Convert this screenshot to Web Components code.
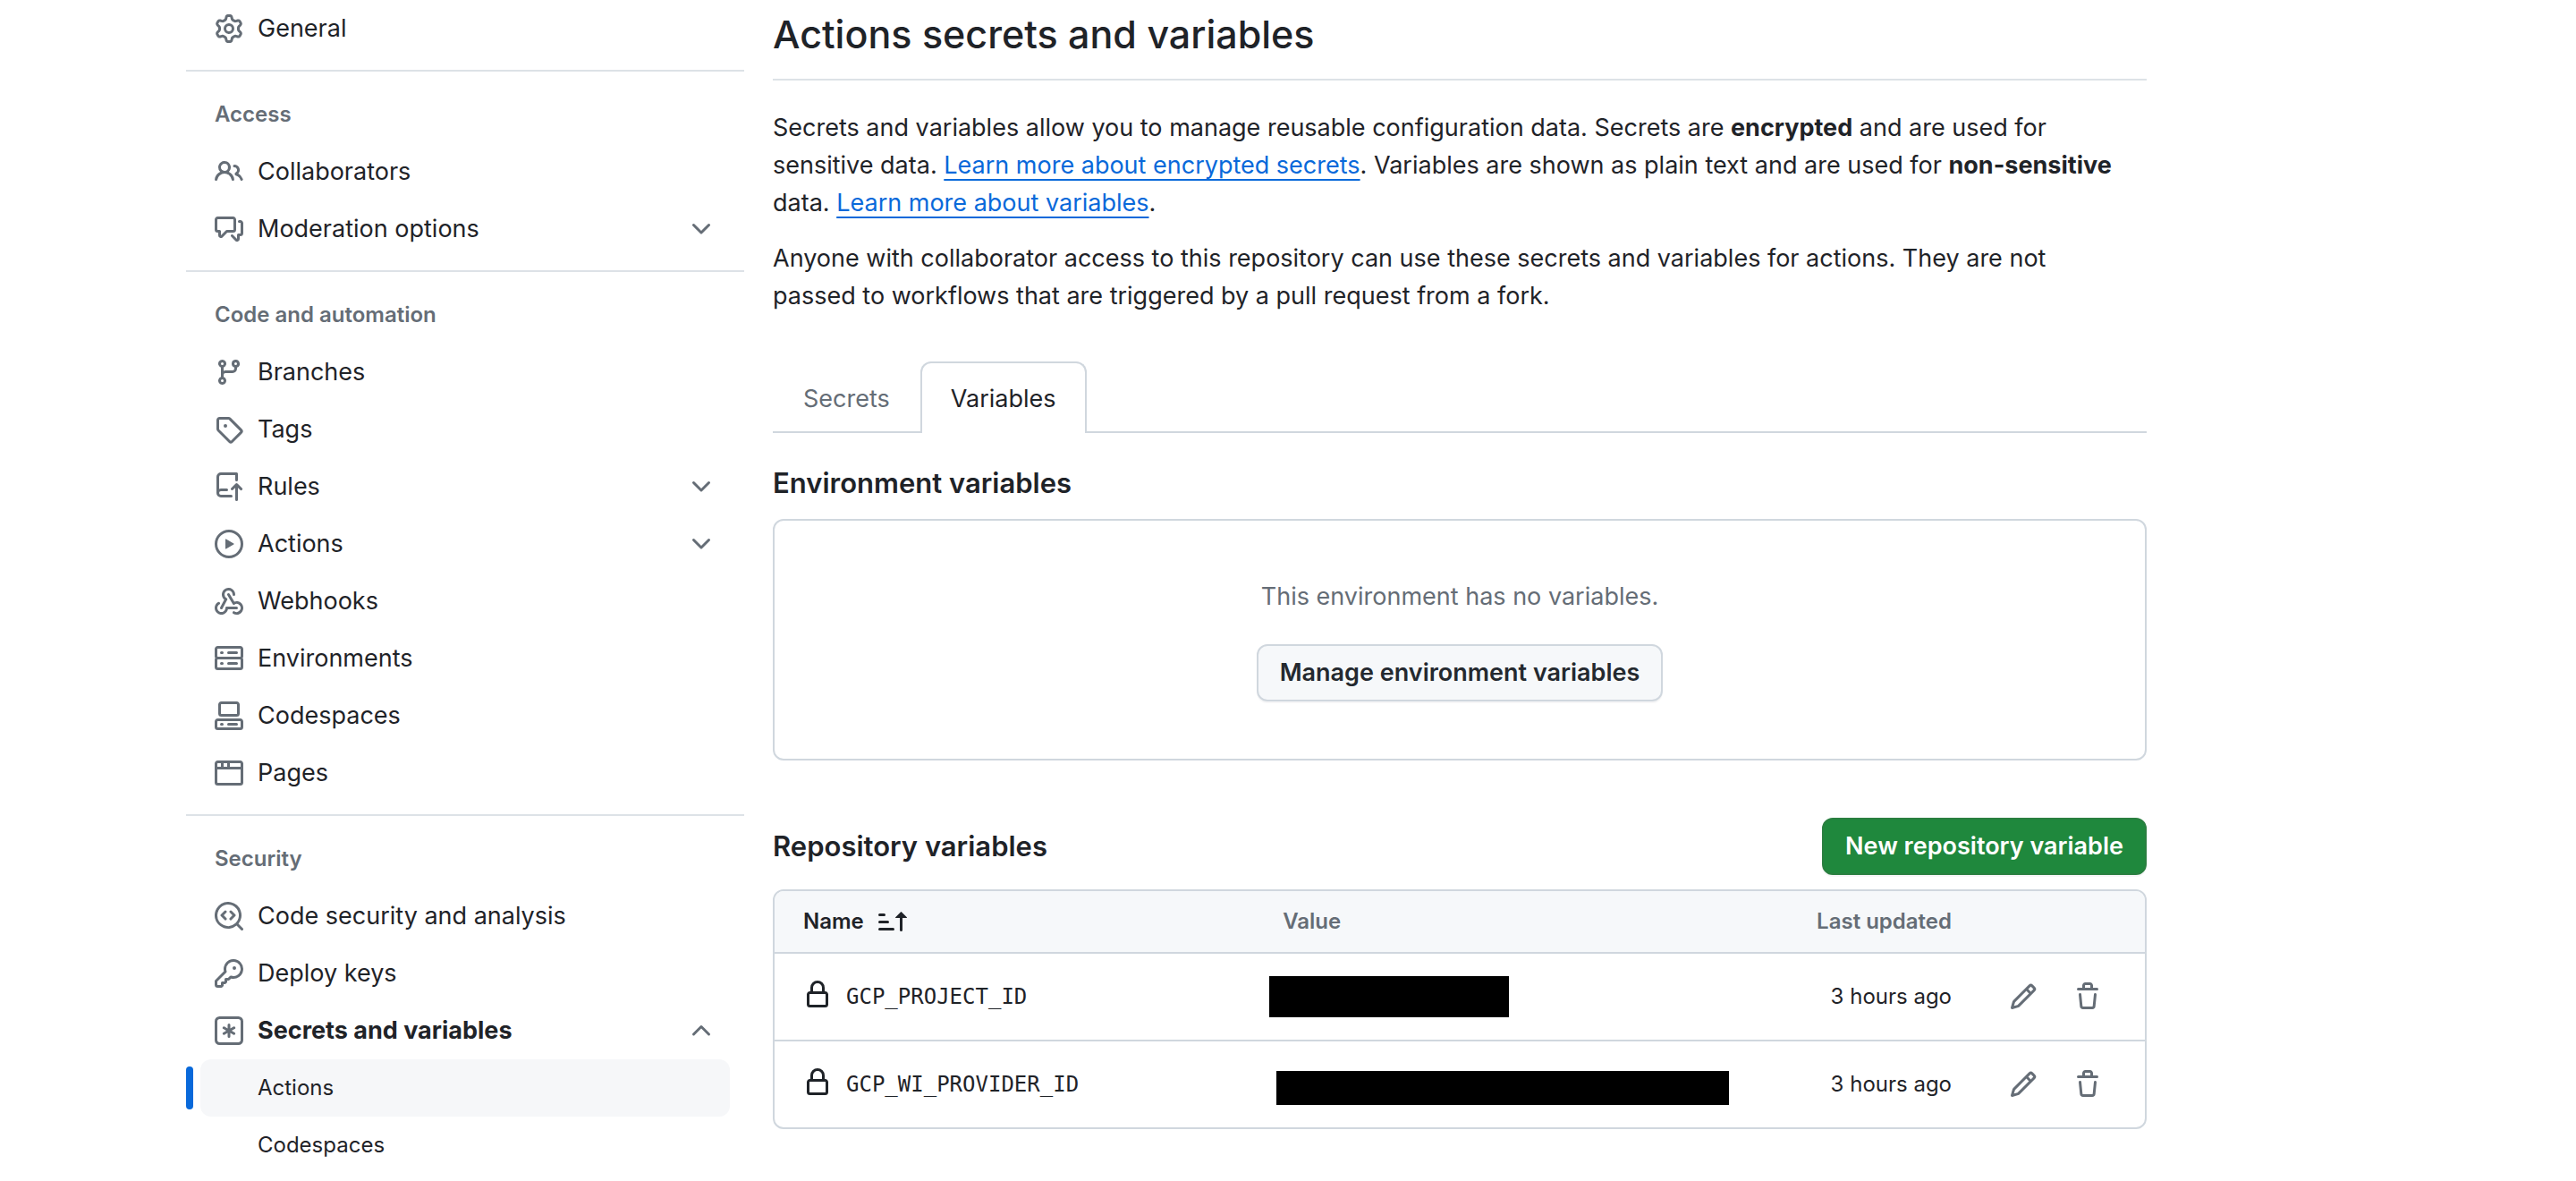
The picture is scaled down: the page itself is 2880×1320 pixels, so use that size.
<!DOCTYPE html>
<html lang="en">
<head>
<meta charset="utf-8">
<title>Actions secrets and variables</title>
<style>
  :root {
    --fg: #1f2328;
    --muted: #656d76;
    --accent: #0969da;
    --border: #d0d7de;
    --border-muted: #dde2e7;
    --subtle: #f6f8fa;
    --radius: 12px;
    --text: 27px;
    --small: 24px;
    --mono: "DejaVu Sans Mono", "Liberation Mono", monospace;
  }
  body {
    margin: 0;
    background: #fff;
    color: var(--fg);
    font: 400 var(--text)/42px Inter, "Liberation Sans", sans-serif;
  }
</style>
</head>
<body>
<settings-page>
  <side-nav slot="nav">
    <nav-section>
      <nav-item icon="gear">General</nav-item>
    </nav-section>
    <nav-section heading="Access">
      <nav-item icon="people">Collaborators</nav-item>
      <nav-item icon="discussion" expandable="closed">Moderation options</nav-item>
    </nav-section>
    <nav-section heading="Code and automation">
      <nav-item icon="branch">Branches</nav-item>
      <nav-item icon="tag">Tags</nav-item>
      <nav-item icon="rules" expandable="closed">Rules</nav-item>
      <nav-item icon="play" expandable="closed">Actions</nav-item>
      <nav-item icon="webhook">Webhooks</nav-item>
      <nav-item icon="server">Environments</nav-item>
      <nav-item icon="codespaces">Codespaces</nav-item>
      <nav-item icon="browser">Pages</nav-item>
    </nav-section>
    <nav-section heading="Security">
      <nav-item icon="codescan">Code security and analysis</nav-item>
      <nav-item icon="key">Deploy keys</nav-item>
      <nav-item icon="asterisk" expandable="open">Secrets and variables</nav-item>
      <nav-item sub current>Actions</nav-item>
      <nav-item sub>Codespaces</nav-item>
    </nav-section>
  </side-nav>

  <page-intro>
    <span slot="title">Actions secrets and variables</span>
    <p>Secrets and variables allow you to manage reusable configuration data. Secrets are <strong>encrypted</strong> and are used for sensitive data. <text-link>Learn more about encrypted secrets</text-link>. Variables are shown as plain text and are used for <strong>non-sensitive</strong> data. <text-link>Learn more about variables</text-link>.</p>
    <p>Anyone with collaborator access to this repository can use these secrets and variables for actions. They are not passed to workflows that are triggered by a pull request from a fork.</p>
  </page-intro>

  <tab-bar tabs="Secrets,Variables" selected="Variables"></tab-bar>

  <content-section heading="Environment variables">
    <blank-slate>
      This environment has no variables.
      <ui-button slot="action">Manage environment variables</ui-button>
    </blank-slate>
  </content-section>

  <content-section heading="Repository variables">
    <ui-button slot="action" variant="primary">New repository variable</ui-button>
    <variables-table></variables-table>
  </content-section>
</settings-page>

<script>
const ICONS = {
  gear: 'M8 0a8.2 8.2 0 0 1 .701.031C9.444.095 9.99.645 10.16 1.29l.288 1.107c.018.066.079.158.212.224.231.114.454.243.668.386.123.082.233.09.299.071l1.103-.303c.644-.176 1.392.021 1.82.63.27.385.506.792.704 1.218.315.675.111 1.422-.364 1.891l-.814.806c-.049.048-.098.147-.088.294.016.257.016.515 0 .772-.01.147.038.246.088.294l.814.806c.475.469.679 1.216.364 1.891a7.977 7.977 0 0 1-.704 1.217c-.428.61-1.176.807-1.82.63l-1.102-.302c-.067-.019-.177-.011-.3.071a5.909 5.909 0 0 1-.668.386c-.133.066-.194.158-.211.224l-.29 1.106c-.168.646-.715 1.196-1.458 1.26a8.006 8.006 0 0 1-1.402 0c-.743-.064-1.289-.614-1.458-1.26l-.289-1.106c-.018-.066-.079-.158-.212-.224a5.738 5.738 0 0 1-.668-.386c-.123-.082-.233-.09-.299-.071l-1.103.303c-.644.176-1.392-.021-1.82-.63a8.12 8.12 0 0 1-.704-1.218c-.315-.675-.111-1.422.363-1.891l.815-.806c.05-.048.098-.147.088-.294a6.214 6.214 0 0 1 0-.772c.01-.147-.038-.246-.088-.294l-.815-.806C.635 6.045.431 5.298.746 4.623a7.92 7.92 0 0 1 .704-1.217c.428-.61 1.176-.807 1.82-.63l1.102.302c.067.019.177.011.3-.071.214-.143.437-.272.668-.386.133-.066.194-.158.211-.224l.29-1.106C6.009.645 6.556.095 7.299.03 7.53.01 7.764 0 8 0Zm-.571 1.525c-.036.003-.108.036-.137.146l-.289 1.105c-.147.561-.549.967-.998 1.189-.173.086-.34.183-.5.29-.417.278-.97.423-1.529.27l-1.103-.303c-.109-.03-.175.016-.195.045-.22.312-.412.644-.573.99-.014.031-.021.11.059.19l.815.806c.411.406.562.957.53 1.456a4.709 4.709 0 0 0 0 .582c.032.499-.119 1.05-.53 1.456l-.815.806c-.081.08-.073.159-.059.19.162.346.353.677.573.989.02.03.085.076.195.046l1.102-.303c.56-.153 1.113-.008 1.53.27.161.107.328.204.501.29.447.222.85.629.997 1.189l.289 1.105c.029.109.101.143.137.146a6.6 6.6 0 0 0 1.142 0c.036-.003.108-.036.137-.146l.289-1.105c.147-.561.549-.967.998-1.189.173-.086.34-.183.5-.29.417-.278.97-.423 1.529-.27l1.103.303c.109.029.175-.016.195-.045.22-.313.411-.644.573-.99.014-.031.021-.11-.059-.19l-.815-.806c-.411-.406-.562-.957-.53-1.456a4.709 4.709 0 0 0 0-.582c-.032-.499.119-1.05.53-1.456l.815-.806c.081-.08.073-.159.059-.19a6.464 6.464 0 0 0-.573-.989c-.02-.03-.085-.076-.195-.046l-1.102.303c-.56.153-1.113.008-1.53-.27a4.44 4.44 0 0 0-.501-.29c-.447-.222-.85-.629-.997-1.189l-.289-1.105c-.029-.11-.101-.143-.137-.146a6.6 6.6 0 0 0-1.142 0ZM11 8a3 3 0 1 1-6 0 3 3 0 0 1 6 0ZM9.5 8a1.5 1.5 0 1 0-3.001.001A1.5 1.5 0 0 0 9.5 8Z',
  people: 'M2 5.5a3.5 3.5 0 1 1 5.898 2.549 5.508 5.508 0 0 1 3.034 4.084.75.75 0 1 1-1.482.235 4 4 0 0 0-7.9 0 .75.75 0 0 1-1.482-.236A5.507 5.507 0 0 1 3.102 8.05 3.493 3.493 0 0 1 2 5.5ZM11 4a3.001 3.001 0 0 1 2.22 5.018 5.01 5.01 0 0 1 2.56 3.012.749.749 0 0 1-.885.954.752.752 0 0 1-.549-.514 3.507 3.507 0 0 0-2.522-2.372.75.75 0 0 1-.574-.73v-.352a.75.75 0 0 1 .416-.672A1.5 1.5 0 0 0 11 5.5.75.75 0 0 1 11 4Zm-5.5-.5a2 2 0 1 0-.001 3.999A2 2 0 0 0 5.5 3.5Z',
  discussion: 'M1.75 1h8.5c.966 0 1.75.784 1.75 1.75v5.5A1.75 1.75 0 0 1 10.25 10H7.061l-2.574 2.573A1.458 1.458 0 0 1 2 11.543V10h-.25A1.75 1.75 0 0 1 0 8.25v-5.5C0 1.784.784 1 1.75 1ZM1.5 2.75v5.5c0 .138.112.25.25.25h1a.75.75 0 0 1 .75.75v2.19l2.72-2.72a.749.749 0 0 1 .53-.22h3.5a.25.25 0 0 0 .25-.25v-5.5a.25.25 0 0 0-.25-.25h-8.5a.25.25 0 0 0-.25.25Zm13 2a.25.25 0 0 0-.25-.25h-.5a.75.75 0 0 1 0-1.5h.5c.966 0 1.75.784 1.75 1.75v5.5A1.75 1.75 0 0 1 14.25 12H14v1.543a1.458 1.458 0 0 1-2.487 1.03L9.22 12.28a.749.749 0 0 1 .326-1.275.749.749 0 0 1 .734.215l2.22 2.22v-2.19a.75.75 0 0 1 .75-.75h1a.25.25 0 0 0 .25-.25Z',
  branch: 'M9.5 3.25a2.25 2.25 0 1 1 3 2.122V6A2.5 2.5 0 0 1 10 8.5H6a1 1 0 0 0-1 1v1.128a2.251 2.251 0 1 1-1.5 0V5.372a2.25 2.25 0 1 1 1.5 0v1.836A2.493 2.493 0 0 1 6 7h4a1 1 0 0 0 1-1v-.628A2.25 2.25 0 0 1 9.5 3.25Zm-6 0a.75.75 0 1 0 1.5 0 .75.75 0 0 0-1.5 0Zm8.25-.75a.75.75 0 1 0 0 1.5.75.75 0 0 0 0-1.5ZM4.25 12a.75.75 0 1 0 0 1.5.75.75 0 0 0 0-1.5Z',
  tag: 'M1 7.775V2.75C1 1.784 1.784 1 2.75 1h5.025c.464 0 .91.184 1.238.513l6.25 6.25a1.75 1.75 0 0 1 0 2.474l-5.026 5.026a1.75 1.75 0 0 1-2.474 0l-6.25-6.25A1.752 1.752 0 0 1 1 7.775Zm1.5 0c0 .066.026.13.073.177l6.25 6.25a.25.25 0 0 0 .354 0l5.025-5.025a.25.25 0 0 0 0-.354l-6.25-6.25a.25.25 0 0 0-.177-.073H2.75a.25.25 0 0 0-.25.25ZM6 5a1 1 0 1 1 0 2 1 1 0 0 1 0-2Z',
  rules: 'M1 2.5A2.5 2.5 0 0 1 3.5 0h8.75a.75.75 0 0 1 .75.75v3.5a.75.75 0 0 1-1.5 0V1.5h-8a1 1 0 0 0-1 1v6.708A2.493 2.493 0 0 1 3.5 9h3.25a.75.75 0 0 1 0 1.5H3.5a1 1 0 0 0 0 2h5.75a.75.75 0 0 1 0 1.5H3.5A2.5 2.5 0 0 1 1 11.5ZM14.23 9.79l-1.224-1.224v6.684a.75.75 0 0 1-1.5 0V8.566L10.28 9.79a.751.751 0 0 1-1.042-.018.751.751 0 0 1-.018-1.042l2.505-2.505a.75.75 0 0 1 1.06 0L15.29 8.73a.75.75 0 1 1-1.06 1.06Z',
  play: 'M8 0a8 8 0 1 1 0 16A8 8 0 0 1 8 0ZM1.5 8a6.5 6.5 0 1 0 13 0 6.5 6.5 0 0 0-13 0Zm4.879-2.773 4.264 2.559a.25.25 0 0 1 0 .428l-4.264 2.559A.25.25 0 0 1 6 10.559V5.442a.25.25 0 0 1 .379-.215Z',
  webhook: 'M5.5 4.25a2.25 2.25 0 0 1 4.5 0 .75.75 0 0 0 1.5 0 3.75 3.75 0 1 0-6.14 2.889l-2.272 4.258a.75.75 0 0 0 1.324.706L7 7.25a.75.75 0 0 0-.309-1.015A2.25 2.25 0 0 1 5.5 4.25Z M7.364 3.607a.75.75 0 0 1 1.03.257l2.608 4.349a3.75 3.75 0 1 1-.628 6.785.75.75 0 0 1 .752-1.299 2.25 2.25 0 1 0-.033-3.88.75.75 0 0 1-1.03-.256L7.107 4.636a.75.75 0 0 1 .257-1.03Z M2.9 8.776A.75.75 0 0 1 2.625 9.8 2.25 2.25 0 1 0 6 11.75a.75.75 0 0 1 .75-.751h5.5a.75.75 0 0 1 0 1.5H7.425a3.751 3.751 0 1 1-5.55-3.998.75.75 0 0 1 1.024.274Z',
  server: 'M1.75 1h12.5c.966 0 1.75.784 1.75 1.75v4c0 .372-.116.717-.314 1 .198.283.314.628.314 1v4a1.75 1.75 0 0 1-1.75 1.75H1.75A1.75 1.75 0 0 1 0 12.75v-4c0-.358.109-.707.314-1a1.739 1.739 0 0 1-.314-1v-4C0 1.784.784 1 1.75 1ZM1.5 2.75v4c0 .138.112.25.25.25h12.5a.25.25 0 0 0 .25-.25v-4a.25.25 0 0 0-.25-.25H1.75a.25.25 0 0 0-.25.25Zm.25 5.75a.25.25 0 0 0-.25.25v4c0 .138.112.25.25.25h12.5a.25.25 0 0 0 .25-.25v-4a.25.25 0 0 0-.25-.25ZM7 4.75A.75.75 0 0 1 7.75 4h4.5a.75.75 0 0 1 0 1.5h-4.5A.75.75 0 0 1 7 4.75ZM7.75 10h4.5a.75.75 0 0 1 0 1.5h-4.5a.75.75 0 0 1 0-1.5ZM3 4.75A.75.75 0 0 1 3.75 4h.5a.75.75 0 0 1 0 1.5h-.5A.75.75 0 0 1 3 4.75ZM3.75 10h.5a.75.75 0 0 1 0 1.5h-.5a.75.75 0 0 1 0-1.5Z',
  codespaces: 'M0 11.25c0-.966.784-1.75 1.75-1.75h12.5c.966 0 1.75.784 1.75 1.75v3A1.75 1.75 0 0 1 14.25 16H1.75A1.75 1.75 0 0 1 0 14.25Zm2-9.5C2 .784 2.784 0 3.75 0h8.5C13.216 0 14 .784 14 1.75v5a1.75 1.75 0 0 1-1.75 1.75h-8.5A1.75 1.75 0 0 1 2 6.75Zm1.75-.25a.25.25 0 0 0-.25.25v5c0 .138.112.25.25.25h8.5a.25.25 0 0 0 .25-.25v-5a.25.25 0 0 0-.25-.25Zm-2 9.5a.25.25 0 0 0-.25.25v3c0 .138.112.25.25.25h12.5a.25.25 0 0 0 .25-.25v-3a.25.25 0 0 0-.25-.25Z M7 12.75a.75.75 0 0 1 .75-.75h4.5a.75.75 0 0 1 0 1.5h-4.5a.75.75 0 0 1-.75-.75Zm-4 0a.75.75 0 0 1 .75-.75h.5a.75.75 0 0 1 0 1.5h-.5a.75.75 0 0 1-.75-.75Z',
  browser: 'M0 2.75C0 1.784.784 1 1.75 1h12.5c.966 0 1.75.784 1.75 1.75v10.5A1.75 1.75 0 0 1 14.25 15H1.75A1.75 1.75 0 0 1 0 13.25ZM14.5 6h-13v7.25c0 .138.112.25.25.25h12.5a.25.25 0 0 0 .25-.25Zm-6-3.5v2h6V2.75a.25.25 0 0 0-.25-.25ZM5 2.5v2h2v-2Zm-3.25 0a.25.25 0 0 0-.25.25V4.5h2v-2Z',
  codescan: 'M8.47 4.97a.75.75 0 0 0 0 1.06L9.94 7.5 8.47 8.97a.75.75 0 1 0 1.06 1.06l2-2a.75.75 0 0 0 0-1.06l-2-2a.75.75 0 0 0-1.06 0ZM6.53 6.03a.75.75 0 0 0-1.06-1.06l-2 2a.75.75 0 0 0 0 1.06l2 2a.75.75 0 1 0 1.06-1.06L5.06 7.5l1.47-1.47Z M12.246 13.307a7.501 7.501 0 1 1 1.06-1.06l2.474 2.473a.749.749 0 1 1-1.06 1.06l-2.474-2.473ZM1.5 7.5a6.002 6.002 0 0 0 3.608 5.504 6.002 6.002 0 0 0 6.486-1.117.748.748 0 0 1 .292-.293A6 6 0 1 0 1.5 7.5Z',
  key: 'M10.5 0a5.499 5.499 0 1 1-1.288 10.848l-.932.932a.749.749 0 0 1-.53.22H7v.75a.749.749 0 0 1-.22.53l-.5.5a.749.749 0 0 1-.53.22H5v.75a.749.749 0 0 1-.22.53l-.5.5a.749.749 0 0 1-.53.22h-2A1.75 1.75 0 0 1 0 14.25v-2c0-.199.079-.389.22-.53l4.932-4.932A5.5 5.5 0 0 1 10.5 0Zm-4 5.5c-.001.431.069.86.205 1.269a.75.75 0 0 1-.181.768L1.5 12.56v1.69c0 .138.112.25.25.25h1.69l.06-.06v-1.19a.75.75 0 0 1 .75-.75h1.19l.06-.06v-1.19a.75.75 0 0 1 .75-.75h1.19l1.023-1.025a.75.75 0 0 1 .768-.18A4 4 0 1 0 6.5 5.5ZM11 6a1 1 0 1 1 0-2 1 1 0 0 1 0 2Z',
  asterisk: 'M0 2.75A2.75 2.75 0 0 1 2.75 0h10.5A2.75 2.75 0 0 1 16 2.75v10.5A2.75 2.75 0 0 1 13.25 16H2.75A2.75 2.75 0 0 1 0 13.25ZM2.75 1.5c-.69 0-1.25.56-1.25 1.25v10.5c0 .69.56 1.25 1.25 1.25h10.5c.69 0 1.25-.56 1.25-1.25V2.75c0-.69-.56-1.25-1.25-1.25Z M8 4a.75.75 0 0 1 .75.75V6.7l1.69-.975a.75.75 0 0 1 .75 1.3L9.5 8l1.69.976a.75.75 0 0 1-.75 1.298L8.75 9.3v1.951a.75.75 0 0 1-1.5 0V9.299l-1.69.976a.75.75 0 0 1-.75-1.3L6.5 8l-1.69-.975a.75.75 0 0 1 .75-1.3l1.69.976V4.75A.75.75 0 0 1 8 4Z',
  'chevron-closed': 'M12.78 5.22a.749.749 0 0 1 0 1.06l-4.25 4.25a.749.749 0 0 1-1.06 0L3.22 6.28a.749.749 0 1 1 1.06-1.06L8 8.939l3.72-3.719a.749.749 0 0 1 1.06 0Z',
  'chevron-open': 'M3.22 10.53a.749.749 0 0 1 0-1.06l4.25-4.25a.749.749 0 0 1 1.06 0l4.25 4.25a.749.749 0 1 1-1.06 1.06L8 6.811 4.28 10.53a.749.749 0 0 1-1.06 0Z',
  lock: 'M4 4a4 4 0 0 1 8 0v2h.25c.966 0 1.75.784 1.75 1.75v5.5A1.75 1.75 0 0 1 12.25 15h-8.5A1.75 1.75 0 0 1 2 13.25v-5.5C2 6.784 2.784 6 3.75 6H4Zm8.25 3.5h-8.5a.25.25 0 0 0-.25.25v5.5c0 .138.112.25.25.25h8.5a.25.25 0 0 0 .25-.25v-5.5a.25.25 0 0 0-.25-.25ZM10.5 6V4a2.5 2.5 0 1 0-5 0v2Z',
  pencil: 'M11.013 1.427a1.75 1.75 0 0 1 2.474 0l1.086 1.086a1.75 1.75 0 0 1 0 2.474l-8.61 8.61c-.21.21-.47.364-.756.445l-3.251.93a.75.75 0 0 1-.927-.928l.929-3.25c.081-.286.235-.547.445-.758l8.61-8.61Zm.176 4.823L9.75 4.81l-6.286 6.287a.253.253 0 0 0-.064.108l-.558 1.953 1.953-.558a.253.253 0 0 0 .108-.064Zm1.238-3.763a.25.25 0 0 0-.354 0L10.811 3.75l1.439 1.44 1.263-1.263a.25.25 0 0 0 0-.354Z',
  trash: 'M11 1.75V3h2.25a.75.75 0 0 1 0 1.5H2.75a.75.75 0 0 1 0-1.5H5V1.75C5 .784 5.784 0 6.75 0h2.5C10.216 0 11 .784 11 1.75ZM4.496 6.675l.66 6.6a.25.25 0 0 0 .249.225h5.19a.25.25 0 0 0 .249-.225l.66-6.6a.75.75 0 0 1 1.492.149l-.66 6.6A1.748 1.748 0 0 1 10.595 15h-5.19a1.75 1.75 0 0 1-1.741-1.575l-.66-6.6a.75.75 0 1 1 1.492-.15ZM6.5 1.75V3h3V1.75a.25.25 0 0 0-.25-.25h-2.5a.25.25 0 0 0-.25.25Z',
  sort: 'm12.927 2.573 3 3A.25.25 0 0 1 15.75 6H13.5v6.75a.75.75 0 0 1-1.5 0V6H9.75a.25.25 0 0 1-.177-.427l3-3a.25.25 0 0 1 .354 0ZM0 12.25a.75.75 0 0 1 .75-.75h7.5a.75.75 0 0 1 0 1.5H.75a.75.75 0 0 1-.75-.75Zm0-4a.75.75 0 0 1 .75-.75h4.5a.75.75 0 0 1 0 1.5H.75a.75.75 0 0 1-.75-.75Zm0-4a.75.75 0 0 1 .75-.75h2.5a.75.75 0 0 1 0 1.5H.75a.75.75 0 0 1-.75-.75Z'
};

function define(name, render) {
  customElements.define(name, class extends HTMLElement {
    connectedCallback() {
      if (this.shadowRoot) return;
      this.attachShadow({ mode: 'open' }).innerHTML = render(this);
    }
  });
}

define('ui-icon', el => `
  <style>
    :host { display: block; flex: none; width: 32px; height: 32px; }
    svg { display: block; width: 100%; height: 100%; fill: currentColor; }
  </style>
  <svg viewBox="0 0 16 16" aria-hidden="true"><path d="${ICONS[el.getAttribute('name')]}"/></svg>`);

define('settings-page', () => `
  <style>
    :host { display: flex; gap: 32px; padding: 0 480px 0 208px; }
    aside { flex: 0 0 624px; }
    main { flex: 1; min-width: 0; }
  </style>
  <aside><slot name="nav"></slot></aside>
  <main><slot></slot></main>`);

define('side-nav', () => `
  <style>:host, nav { display: block; }</style>
  <nav aria-label="Settings"><slot></slot></nav>`);

define('nav-section', el => {
  const heading = el.getAttribute('heading');
  return `
  <style>
    :host { display: block; }
    :host([heading]) { margin-top: 14px; padding-top: 16px; border-top: 2px solid var(--border-muted); }
    h2 { margin: 0; padding: 0 32px; font-size: var(--small); font-weight: 600; line-height: 64px; color: var(--muted); }
    ul { display: block; margin: 0; padding: 0 16px; list-style: none; }
  </style>
  ${heading ? `<h2>${heading}</h2>` : ''}
  <ul><slot></slot></ul>`;
});

define('nav-item', el => {
  const icon = el.getAttribute('icon');
  const state = el.getAttribute('expandable');
  const body = `${icon ? `<ui-icon name="${icon}"></ui-icon>` : ''}<span><slot></slot></span>${state ? `<ui-icon name="chevron-${state}"></ui-icon>` : ''}`;
  return `
  <style>
    :host, li { display: block; position: relative; }
    a, button {
      display: flex; align-items: center; gap: 16px; box-sizing: border-box;
      width: 100%; height: 64px; margin: 0; padding: 0 16px; border: 0; border-radius: var(--radius);
      background: none; color: inherit; font: inherit; text-align: left; text-decoration: none;
    }
    span { flex: 1; }
    ui-icon { color: var(--muted); }
    :host([expandable="open"]) button { font-weight: 700; }
    :host([sub]) a { padding-left: 64px; font-size: var(--small); }
    :host([current]) a { background: #f6f7f9; }
    :host([current]) li::before {
      content: ""; position: absolute; left: -16px; top: 8px;
      width: 8px; height: 48px; border-radius: 12px; background: var(--accent);
    }
  </style>
  <li>${state ? `<button type="button" aria-expanded="${state === 'open'}">${body}</button>`
              : `<a href="#"${el.hasAttribute('current') ? ' aria-current="page"' : ''}>${body}</a>`}</li>`;
});

define('page-intro', () => `
  <style>
    :host { display: block; }
    h1 { margin: 0 0 32px; padding: 2px 0 14px; border-bottom: 2px solid var(--border-muted); font-size: 43px; font-weight: 500; line-height: 72px; }
    ::slotted(p) { margin: 0 0 20px; padding-right: 20px; }
    ::slotted(p:last-child) { margin: 0; }
  </style>
  <h1><slot name="title"></slot></h1>
  <slot></slot>`);

define('text-link', () => `
  <style>
    :host { display: inline; }
    a { color: var(--accent); text-decoration: underline; text-decoration-thickness: 2px; text-underline-offset: 6px; text-decoration-skip-ink: none; }
  </style>
  <a href="#"><slot></slot></a>`);

define('tab-bar', el => `
  <style>
    :host { display: block; margin: 52px 0 32px; }
    nav { display: flex; box-shadow: inset 0 -2px var(--border); }
    a {
      box-sizing: border-box; height: 80px; padding: 0 32px; line-height: 80px;
      border: 2px solid transparent; border-bottom: 0; border-radius: var(--radius) var(--radius) 0 0;
      color: var(--muted); text-decoration: none;
    }
    a[aria-current] { background: #fff; border-color: var(--border); color: var(--fg); }
  </style>
  <nav>${el.getAttribute('tabs').split(',').map(t =>
    `<a href="#"${t === el.getAttribute('selected') ? ' aria-current="page"' : ''}>${t}</a>`).join('')}</nav>`);

define('content-section', el => `
  <style>
    :host { display: block; margin-bottom: 64px; }
    header { display: flex; align-items: center; justify-content: space-between; min-height: 48px; margin-bottom: 16px; }
    h2 { margin: 0; font-size: 31px; font-weight: 600; line-height: 48px; }
  </style>
  <header><h2>${el.getAttribute('heading')}</h2><slot name="action"></slot></header>
  <slot></slot>`);

define('ui-button', () => `
  <style>
    :host { display: inline-block; vertical-align: top; }
    button {
      display: block; box-sizing: border-box; height: 64px; margin: 0; padding: 0 24px;
      border: 2px solid var(--border); border-radius: var(--radius);
      background: var(--subtle); color: #24292f; font: inherit; font-weight: 600; line-height: 60px;
      box-shadow: 0 2px 0 rgba(31, 35, 40, .04);
    }
    :host([variant="primary"]) button { border-color: #2a7f40; background: #1f883d; color: #fff; }
  </style>
  <button type="button"><slot></slot></button>`);

define('blank-slate', () => `
  <style>
    :host {
      display: flex; flex-direction: column; align-items: center; gap: 32px;
      padding: 64px; border: 2px solid var(--border); border-radius: var(--radius);
    }
    p { margin: 0; color: var(--muted); }
  </style>
  <p><slot></slot></p>
  <slot name="action"></slot>`);

const VARIABLES = [
  { name: 'GCP_PROJECT_ID', updated: '3 hours ago', bar: 'short' },
  { name: 'GCP_WI_PROVIDER_ID', updated: '3 hours ago', bar: 'long' }
];

define('variables-table', () => `
  <style>
    :host { display: block; border: 2px solid var(--border); border-radius: var(--radius); overflow: hidden; }
    table { width: 100%; border-spacing: 0; table-layout: fixed; font-size: var(--small); line-height: 36px; }
    th, td { box-sizing: border-box; padding: 0 32px; text-align: left; vertical-align: middle; }
    th { height: 68px; background: var(--subtle); color: var(--muted); font-weight: 600; }
    td { height: 98px; border-top: 2px solid var(--border); }
    .name { width: 35%; }
    .updated { width: 240px; text-align: right; }
    .actions { width: 184px; padding-left: 0; }
    .tools { display: flex; justify-content: flex-end; gap: 8px; }
    .entry { display: flex; gap: 16px; font-family: var(--mono); }
    .sort { display: flex; align-items: center; gap: 16px; color: var(--fg); }
    button { margin: 0; padding: 0; border: 0; background: none; color: inherit; font: inherit; }
    .tools button { padding: 16px; color: var(--muted); }
    .value { padding-left: 17px; }
    .bar { display: block; width: 268px; height: 46px; background: #000; }
    .bar.long { width: 506px; height: 38px; margin: 8px 0 0 8px; }
  </style>
  <table>
    <thead>
      <tr>
        <th class="name" scope="col"><button class="sort" type="button">Name <ui-icon name="sort"></ui-icon></button></th>
        <th scope="col">Value</th>
        <th class="updated" scope="col">Last updated</th>
        <th class="actions" scope="col" aria-label="Row actions"></th>
      </tr>
    </thead>
    <tbody>${VARIABLES.map(v => `
      <tr>
        <td><div class="entry"><ui-icon name="lock"></ui-icon>${v.name}</div></td>
        <td class="value"><span class="bar ${v.bar}"></span></td>
        <td class="updated">${v.updated}</td>
        <td class="actions"><div class="tools">
          <button type="button" aria-label="Edit ${v.name}"><ui-icon name="pencil"></ui-icon></button>
          <button type="button" aria-label="Delete ${v.name}"><ui-icon name="trash"></ui-icon></button>
        </div></td>
      </tr>`).join('')}
    </tbody>
  </table>`);
</script>
</body>
</html>
